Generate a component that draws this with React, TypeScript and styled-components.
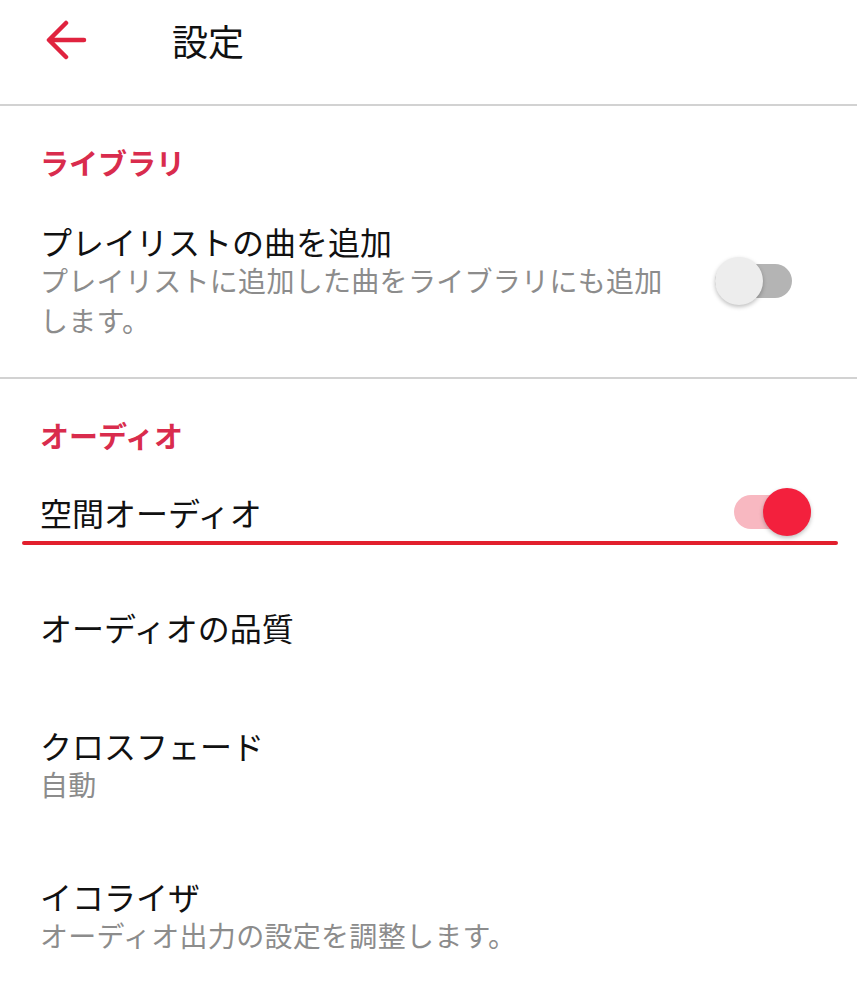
import styled, { createGlobalStyle } from "styled-components";

const GlobalStyle = createGlobalStyle`
  body {
    margin: 0;
    background: #ffffff;
    font-family: "Noto Sans CJK JP", "Noto Sans", sans-serif;
    color: #111111;
  }
`;

const Page = styled.div`
  width: 857px;
  min-height: 993px;
  background: #ffffff;
`;

const Header = styled.header`
  height: 106px;
  box-sizing: border-box;
  display: flex;
  align-items: flex-start;
  padding: 20px 0 0 45px;
  border-bottom: 2px solid #d2d2d2;
`;

const BackButton = styled.button`
  width: 42px;
  height: 40px;
  padding: 0;
  border: none;
  background: transparent;
  display: flex;
  align-items: center;
  justify-content: center;
`;

const Title = styled.h1`
  margin: 0 0 0 85px;
  font-size: 36px;
  font-weight: 400;
  line-height: 40px;
  color: #111111;
`;

const Section = styled.section<{ $divider?: boolean }>`
  padding-top: 36px;
  border-bottom: ${(p) => (p.$divider ? "2px solid #d2d2d2" : "none")};
`;

const SectionLabel = styled.h2`
  margin: 0;
  padding-left: 40px;
  font-size: 29px;
  font-weight: 700;
  line-height: 40px;
  color: #d92c4d;
`;

const Item = styled.div<{ $top: number; $bottom: number; $right?: number }>`
  display: flex;
  align-items: center;
  justify-content: space-between;
  padding: ${(p) => `${p.$top}px ${p.$right ?? 40}px ${p.$bottom}px 40px`};
`;

const TextColumn = styled.div`
  display: flex;
  flex-direction: column;
  max-width: 632px;
`;

const ItemTitle = styled.div<{ $lh?: number }>`
  font-size: 32px;
  line-height: ${(p) => p.$lh ?? 38}px;
  color: #111111;
`;

const ItemSub = styled.div`
  font-size: 28px;
  line-height: 40px;
  color: #8c8c8c;
  letter-spacing: 0.3px;
`;

const FocusLine = styled.div`
  height: 4px;
  margin: 9px 19px 0 22px;
  background: #e21f2d;
  border-radius: 2px;
`;

const SwitchBox = styled.div`
  position: relative;
  width: 77px;
  height: 48px;
  margin: -4px 0;
  flex-shrink: 0;
`;

const Track = styled.div<{ $on: boolean }>`
  position: absolute;
  left: 0;
  right: 0;
  top: 7px;
  height: 34px;
  border-radius: 17px;
  background: ${(p) => (p.$on ? "#f8b8c1" : "#b4b4b4")};
`;

const Thumb = styled.div<{ $on: boolean }>`
  position: absolute;
  top: 0;
  ${(p) => (p.$on ? "right: 0;" : "left: 0;")}
  width: 48px;
  height: 48px;
  border-radius: 50%;
  background: ${(p) => (p.$on ? "#f3203d" : "#ededed")};
  box-shadow: 0 2px 4px rgba(0, 0, 0, 0.25);
`;

function Switch({ on }: { on: boolean }) {
  return (
    <SwitchBox>
      <Track $on={on} />
      <Thumb $on={on} />
    </SwitchBox>
  );
}

function BackArrow() {
  return (
    <svg width="42" height="40" viewBox="0 0 42 40" fill="none">
      <path
        d="M39 20H5M21 3L4 20L21 37"
        stroke="#e0233f"
        strokeWidth="4.5"
        strokeLinecap="round"
        strokeLinejoin="round"
      />
    </svg>
  );
}

export default function App() {
  return (
    <Page>
      <GlobalStyle />
      <Header>
        <BackButton aria-label="戻る">
          <BackArrow />
        </BackButton>
        <Title>設定</Title>
      </Header>

      <Section $divider>
        <SectionLabel>ライブラリ</SectionLabel>
        <Item $top={40} $bottom={37} $right={65}>
          <TextColumn>
            <ItemTitle>プレイリストの曲を追加</ItemTitle>
            <ItemSub>プレイリストに追加した曲をライブラリにも追加します。</ItemSub>
          </TextColumn>
          <Switch on={false} />
        </Item>
      </Section>

      <Section>
        <SectionLabel>オーディオ</SectionLabel>
        <Item $top={37} $bottom={0} $right={46}>
          <TextColumn>
            <ItemTitle $lh={40}>空間オーディオ</ItemTitle>
          </TextColumn>
          <Switch on={true} />
        </Item>
        <FocusLine />
        <Item $top={62} $bottom={40}>
          <TextColumn>
            <ItemTitle $lh={40}>オーディオの品質</ItemTitle>
          </TextColumn>
        </Item>
        <Item $top={39} $bottom={37}>
          <TextColumn>
            <ItemTitle>クロスフェード</ItemTitle>
            <ItemSub>自動</ItemSub>
          </TextColumn>
        </Item>
        <Item $top={36} $bottom={30}>
          <TextColumn>
            <ItemTitle>イコライザ</ItemTitle>
            <ItemSub>オーディオ出力の設定を調整します。</ItemSub>
          </TextColumn>
        </Item>
      </Section>
    </Page>
  );
}
